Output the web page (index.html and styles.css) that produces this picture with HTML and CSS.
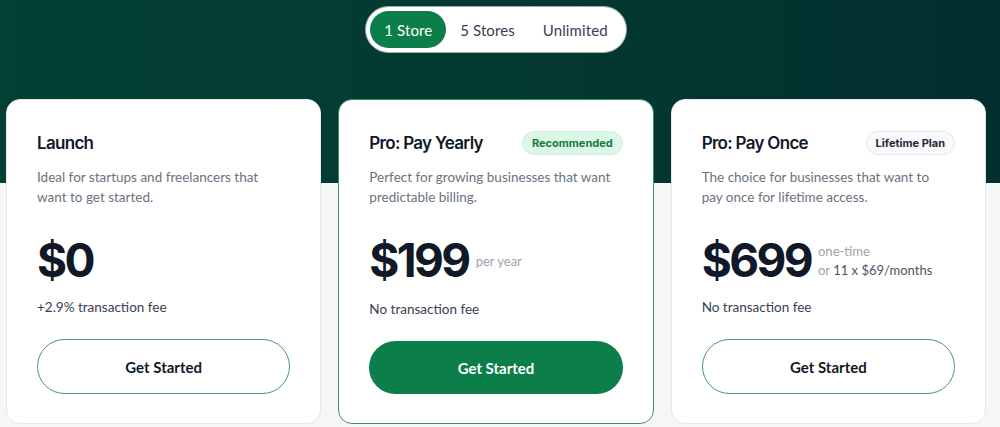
FILE: index.html
```html
<!DOCTYPE html>
<html lang="en">
<head>
<meta charset="utf-8">
<title>Pricing</title>
<link rel="stylesheet" href="styles.css">
</head>
<body>
<div class="page">
  <div class="toggle-wrap">
    <div class="toggle">
      <span class="opt active">1 Store</span>
      <span class="opt">5 Stores</span>
      <span class="opt">Unlimited</span>
    </div>
  </div>
  <div class="cards">
    <div class="card">
      <div class="card-head">
        <h2 class="title">Launch</h2>
      </div>
      <p class="desc">Ideal for startups and freelancers that want to get started.</p>
      <div class="price-row">
        <span class="price">$0</span>
      </div>
      <p class="fee">+2.9% transaction fee</p>
      <a class="btn btn-outline">Get Started</a>
    </div>
    <div class="card card-featured">
      <div class="card-head">
        <h2 class="title">Pro: Pay Yearly</h2>
        <span class="badge badge-green">Recommended</span>
      </div>
      <p class="desc">Perfect for growing businesses that want predictable billing.</p>
      <div class="price-row">
        <span class="price">$199</span>
        <span class="suffix"><span class="light">per year</span></span>
      </div>
      <p class="fee fee-shift">No transaction fee</p>
      <a class="btn btn-solid">Get Started</a>
    </div>
    <div class="card">
      <div class="card-head">
        <h2 class="title">Pro: Pay Once</h2>
        <span class="badge badge-gray">Lifetime Plan</span>
      </div>
      <p class="desc">The choice for businesses that want to pay once for lifetime access.</p>
      <div class="price-row">
        <span class="price">$699</span>
        <span class="suffix"><span class="light">one-time</span><span class="light">or <span class="dark">11 x $69/months</span></span></span>
      </div>
      <p class="fee">No transaction fee</p>
      <a class="btn btn-outline">Get Started</a>
    </div>
  </div>
</div>
</body>
</html>
```

FILE: styles.css
```css
* { box-sizing: border-box; }
html, body { margin: 0; padding: 0; }
body {
  font-family: "Lato", "Inter", sans-serif;
  background: #f5f6f8;
  color: #111827;
}
.page {
  height: 427px;
  overflow: hidden;
  padding: 7px 14px 0 6px;
  background:
    linear-gradient(90deg, #033f33 0%, #033a31 50%, #032f2f 100%) 0 0 / 100% 183px no-repeat,
    #f5f6f8;
}
.toggle-wrap {
  display: flex;
  justify-content: center;
}
.toggle {
  display: flex;
  align-items: center;
  background: #ffffff;
  border-radius: 23px;
  padding: 4px;
  height: 45px;
  box-shadow: 0 0 0 1px rgba(255,255,255,0.6);
}
.opt {
  height: 37px;
  display: flex;
  align-items: center;
  padding: 0 14px;
  font-size: 15px;
  color: #374151;
  border-radius: 19px;
  letter-spacing: 0.1px;
}
.opt.active {
  background: #0b7e4a;
  color: #ffffff;
}
.cards {
  margin-top: 47px;
  display: grid;
  grid-template-columns: repeat(3, 1fr);
  gap: 17px;
}
.card {
  background: #ffffff;
  border: 1px solid #e6e8eb;
  border-radius: 14px;
  height: 325px;
  padding: 31px 30px 0 30px;
  display: flex;
  flex-direction: column;
}
.card-featured {
  border-color: #3d8f66;
}
.card-head {
  display: flex;
  align-items: center;
  justify-content: space-between;
  height: 24px;
}
.title {
  margin: 0;
  font-family: "Inter", sans-serif;
  font-size: 17px;
  font-weight: 600;
  letter-spacing: -0.7px;
  color: #111827;
  line-height: 24px;
}
.badge {
  height: 24px;
  display: inline-flex;
  align-items: center;
  padding: 0 9px;
  border-radius: 12px;
  font-size: 11px;
  font-weight: 700;
  font-family: "Inter", sans-serif;
}
.badge-green {
  background: #dcf7e6;
  color: #167a47;
  border: 1px solid #cdf0da;
}
.badge-gray {
  background: #f8f9fa;
  color: #1f2937;
  border: 1px solid #e5e7eb;
}
.desc {
  margin: 13px 0 0;
  font-size: 13.5px;
  line-height: 19.5px;
  color: #6b7280;
  max-width: 250px;
}
.price-row {
  margin-top: 29px;
  display: flex;
  align-items: center;
  gap: 7px;
  height: 48px;
}
.price {
  font-family: "Inter", sans-serif;
  font-size: 46px;
  font-weight: 700;
  letter-spacing: -2.6px;
  line-height: 48px;
  color: #111827;
}
.suffix {
  display: flex;
  flex-direction: column;
  font-size: 13px;
  line-height: 19px;
  padding-top: 2px;
}
.light { color: #9ca3af; }
.dark { color: #4b5563; }
.fee {
  margin: 13px 0 0;
  font-size: 13.5px;
  line-height: 20px;
  color: #374151;
}
.fee-shift { margin-top: 15px; }
.btn {
  margin-top: 22px;
  height: 55px;
  border-radius: 28px;
  display: flex;
  align-items: center;
  justify-content: center;
  font-size: 15px;
  font-weight: 700;
  color: #111827;
  text-decoration: none;
}
.btn-outline {
  border: 1px solid #3f9a6f;
  background: #ffffff;
}
.btn-solid {
  background: #0b7e4a;
  color: #ffffff;
  height: 53px;
}
```
